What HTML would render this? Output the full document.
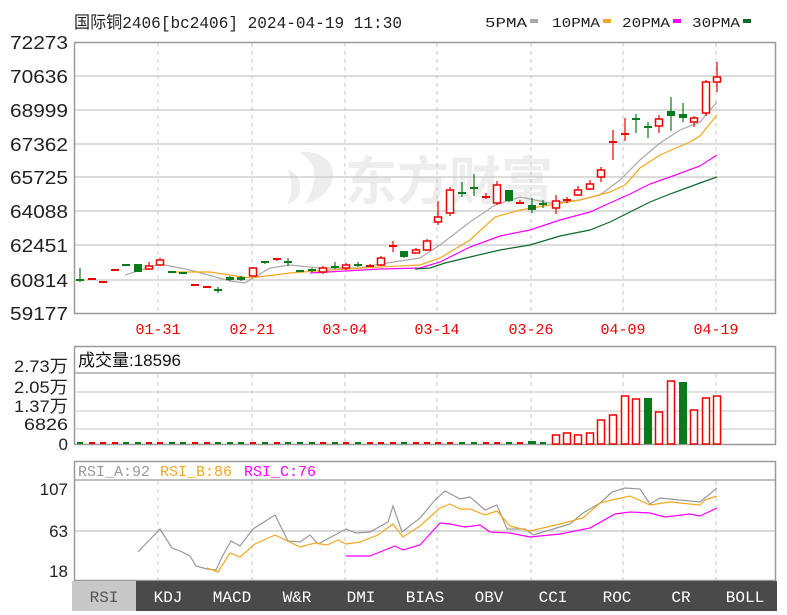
<!DOCTYPE html>
<html><head><meta charset="utf-8"><style>
html,body{margin:0;padding:0;background:#fff;width:787px;height:615px;overflow:hidden}
svg{display:block}
.t{font-family:"Liberation Sans","Noto Sans CJK SC",sans-serif}
.m{font-family:"Liberation Mono","Noto Sans CJK SC",monospace}
</style></head><body>
<svg id="s" width="787" height="615" xmlns="http://www.w3.org/2000/svg">
<rect width="787" height="615" fill="#fff"/>
<path d="M300 152 C318 150 335 160 333 178 C330 192 318 200 305 204 C312 192 318 178 312 165 C308 158 303 155 300 152Z M288 170 C296 172 302 180 300 192 C297 200 292 203 287 204 C292 195 293 183 288 170Z" fill="#ededed"/>
<text x="345" y="200" font-size="52" font-weight="bold" fill="#ededed" class="t">东方财富</text>
<text x="74" y="28" font-size="17" class="m" fill="#222" textLength="328" lengthAdjust="spacingAndGlyphs">国际铜2406[bc2406] 2024-04-19 11:30</text>
<g class="m" font-size="14" fill="#222">
<text x="485" y="27" textLength="42" lengthAdjust="spacingAndGlyphs">5PMA</text><rect x="530" y="19" width="8" height="4" fill="#aaa"/>
<text x="552" y="27" textLength="48" lengthAdjust="spacingAndGlyphs">10PMA</text><rect x="603" y="19" width="8" height="4" fill="#f0a81e"/>
<text x="622" y="27" textLength="48" lengthAdjust="spacingAndGlyphs">20PMA</text><rect x="673" y="19" width="8" height="4" fill="#f0f"/>
<text x="692" y="27" textLength="48" lengthAdjust="spacingAndGlyphs">30PMA</text><rect x="743" y="19" width="8" height="4" fill="#0a6b2a"/>
</g>
<g id="g"></g>
<rect x="72" y="581" width="705" height="30" fill="#4a4a4a"/>
<rect x="72" y="581" width="64" height="30" fill="#c8c8c8"/>
<g class="m" font-size="16" fill="#fff" text-anchor="middle">
<text x="104" y="602" fill="#555">RSI</text><text x="168" y="602">KDJ</text><text x="232" y="602">MACD</text><text x="297" y="602">W&amp;R</text><text x="361" y="602">DMI</text><text x="425" y="602">BIAS</text><text x="489" y="602">OBV</text><text x="553" y="602">CCI</text><text x="617" y="602">ROC</text><text x="681" y="602">CR</text><text x="745" y="602">BOLL</text>
</g>
</svg>
<script>
var S='';
function L(x1,y1,x2,y2,c,w,d){S+='<line x1="'+x1+'" y1="'+y1+'" x2="'+x2+'" y2="'+y2+'" stroke="'+c+'" stroke-width="'+(w||1)+'"'+(d?' stroke-dasharray="'+d+'"':'')+'/>';}
function T(x,y,s,fs,c,a,f,tl){S+='<text x="'+x+'" y="'+y+'" font-size="'+fs+'" fill="'+c+'" class="'+(f||'t')+'"'+(a?' text-anchor="'+a+'"':'')+(tl?' textLength="'+tl+'" lengthAdjust="spacingAndGlyphs"':'')+'>'+s+'</text>';}
function P(pts,c){S+='<polyline fill="none" stroke="'+c+'" stroke-width="1.2" points="'+pts.map(function(p){return p.join(',')}).join(' ')+'"/>';}
var VX=[158,252,345,437,531,623,716];
var gy=[42,76,110,144,177,211,245,280,313],gl=['72273','70636','68999','67362','65725','64088','62451','60814','59177'];
for(var i=1;i<8;i++)L(75,gy[i],775,gy[i],'#d0d0d0',1.5);
VX.forEach(function(x){L(x,43,x,312,'#c8c8c8',1,'4,4')});
for(i=0;i<9;i++)T(68,gy[i]+7,gl[i],18,'#222','end',0,58);
S+='<rect x="74.5" y="42.5" width="701" height="271" fill="none" stroke="#999" stroke-width="1.5"/>';
var dl=['01-31','02-21','03-04','03-14','03-26','04-09','04-19'];
VX.forEach(function(x,k){T(x,334,dl[k],15,'#e00','middle','m')});
P([[125,275],[160,264],[190,270],[230,281],[245,283],[270,268],[290,265],[320,268],[360,268],[380,264],[420,258],[440,245],[470,222],[495,205],[520,197],[550,203],[580,200],[600,195],[620,180],[640,160],[660,143],[680,130],[700,122],[717,102]],'#aaa');
P([[170,272],[210,272],[250,278],[290,273],[330,270],[380,267],[420,265],[440,258],[470,240],[495,217],[520,210],[550,205],[580,200],[610,192],[625,185],[640,168],[660,155],[690,142],[700,136],[717,115]],'#f0a81e');
P([[310,273],[380,269],[420,268],[440,262],[470,247],[500,236],[530,230],[560,220],[590,212],[610,203],[630,194],[650,184],[670,177],[700,166],[717,155]],'#f0f');
P([[415,269],[430,268],[445,263],[470,257],[500,250],[530,245],[560,236],[590,230],[610,222],[630,212],[650,202],[670,194],[700,183],[717,177]],'#0a6b2a');
var C=[[80,280,281,268,282,0],[92,279,279,278,280,1],[103,282,282,281,283,1],[115,270,270,269,271,1],[126,265,265,264,266,0],[138,264,272,264,272,0],[149,266,269,262,270,1],[160,260,265,258,266,1],[172,272,272,271,273,0],[183,273,273,272,274,0],[195,285,285,284,286,1],[207,287,287,286,288,1],[218,290,290,287,293,0],[230,277,280,276,281,0],[241,277,280,276,281,0],[253,268,276,267,276,1],[265,262,263,261,264,0],[277,259,260,258,261,1],[288,262,262,258,266,0],[300,271,271,270,272,0],[312,270,270,268,272,0],[323,268,272,266,274,1],[335,267,268,262,269,0],[346,265,268,263,270,1],[358,265,266,262,267,0],[370,266,266,264,267,1],[381,258,265,256,266,1],[393,246,247,241,252,1],[404,251,257,251,258,0],[416,250,253,248,253,1],[427,241,250,239,251,1],[438,217,222,201,225,1],[450,190,213,187,216,1],[462,193,193,182,197,0],[474,188,188,174,196,0],[486,197,197,193,199,1],[497,185,203,181,205,1],[509,190,201,190,202,0],[520,203,204,200,204,1],[532,205,210,198,213,0],[543,204,204,200,208,0],[556,201,208,195,214,1],[567,200,201,197,203,1],[578,190,195,186,196,1],[590,184,189,180,190,1],[601,170,177,167,182,1],[613,142,143,130,160,1],[625,134,135,118,141,1],[636,119,119,114,133,0],[648,127,127,122,138,0],[659,119,126,115,133,1],[671,111,116,97,131,0],[683,114,118,103,122,0],[694,118,122,116,127,1],[706,82,113,80,116,1],[717,77,82,62,92,1]];
C.forEach(function(c){var col=c[5]?'#e00':'#0a7a1a';L(c[0],c[3],c[0],c[4],col,1.2);var h=c[2]-c[1];
 if(h<2){L(c[0]-4,c[1],c[0]+4,c[1],col,2);}
 else if(c[5]){S+='<rect x="'+(c[0]-3.5)+'" y="'+c[1]+'" width="7" height="'+h+'" fill="#fff" stroke="#e00" stroke-width="1.5"/>';}
 else S+='<rect x="'+(c[0]-4)+'" y="'+c[1]+'" width="8" height="'+h+'" fill="#0a7a1a"/>';});
S+='<rect x="74.5" y="346.5" width="701" height="98" fill="none" stroke="#999" stroke-width="1.5"/>';
L(75,373,775,373,'#aaa',1.5);
[392,411,429].forEach(function(y){L(75,y,775,y,'#d8d8d8',1.5)});
VX.forEach(function(x){L(x,374,x,444,'#c8c8c8',1,'4,4')});
T(78,366,'成交量:18596',17,'#111');
[['2.73万',372,54],['2.05万',393,54],['1.37万',412,54],['6826',430,44],['0',450,0]].forEach(function(a){T(68,a[1],a[0],17,'#222','end',0,a[2]||0)});
var V={532:[441,0],544:[438,1],556:[435,1],567:[433,1],578:[435,1],590:[433,1],601:[420,1],613:[415,1],625:[396,1],636:[399,1],648:[398,0],659:[412,1],671:[381,1],683:[382,0],694:[410,1],706:[398,1],717:[396,1]};
C.forEach(function(c,k){var v=V[c[0]];if(!v){L(c[0]-3,443,c[0]+3,443,c[5]?'#e00':'#0a7a1a',2);return;}
 if(v[1])S+='<rect x="'+(c[0]-3.5)+'" y="'+v[0]+'" width="7" height="'+(444-v[0])+'" fill="#fff" stroke="#e00" stroke-width="1.5"/>';
 else S+='<rect x="'+(c[0]-4)+'" y="'+v[0]+'" width="8" height="'+(444-v[0])+'" fill="#0a7a1a"/>';});
S+='<rect x="74.5" y="461.5" width="701" height="119" fill="none" stroke="#999" stroke-width="1.5"/>';
L(75,480,775,480,'#aaa',1.5);L(75,531,775,531,'#ccc',1.5);
VX.forEach(function(x){L(x,481,x,580,'#c8c8c8',1,'4,4')});
T(78,476,'RSI_A:92',15,'#999',0,'m');T(160,476,'RSI_B:86',15,'#f0a81e',0,'m');T(244,476,'RSI_C:76',15,'#f0f',0,'m');
T(68,495,'107',17,'#222','end');T(68,537,'63',17,'#222','end');T(68,577,'18',17,'#222','end');
P([[138,552],[160,529],[172,548],[180,551],[190,556],[196,566],[207,569],[216,570],[222,557],[231,541],[240,546],[253,529],[275,515],[288,541],[300,542],[310,535],[318,544],[346,529],[356,533],[370,532],[388,522],[393,506],[402,532],[420,518],[435,500],[445,491],[460,499],[470,497],[485,510],[497,505],[507,529],[525,529],[533,535],[550,530],[570,524],[583,513],[600,503],[612,492],[625,488],[640,489],[650,504],[660,498],[680,500],[700,502],[705,498],[717,488]],'#999');
P([[207,568],[218,572],[230,553],[240,557],[255,544],[275,535],[300,547],[315,543],[327,545],[338,540],[346,544],[360,542],[378,535],[393,524],[403,537],[420,526],[440,508],[450,504],[460,509],[470,509],[485,515],[497,511],[510,526],[530,531],[560,524],[583,518],[600,503],[612,500],[630,496],[650,505],[670,502],[700,505],[705,500],[717,496]],'#f0a81e');
P([[346,556],[370,556],[380,552],[395,546],[403,550],[420,545],[440,523],[450,524],[465,527],[480,525],[490,532],[510,533],[530,537],[560,534],[590,528],[615,514],[630,512],[650,513],[665,517],[690,514],[700,516],[717,508]],'#f0f');
document.getElementById('g').innerHTML=S;
</script>
</body></html>
